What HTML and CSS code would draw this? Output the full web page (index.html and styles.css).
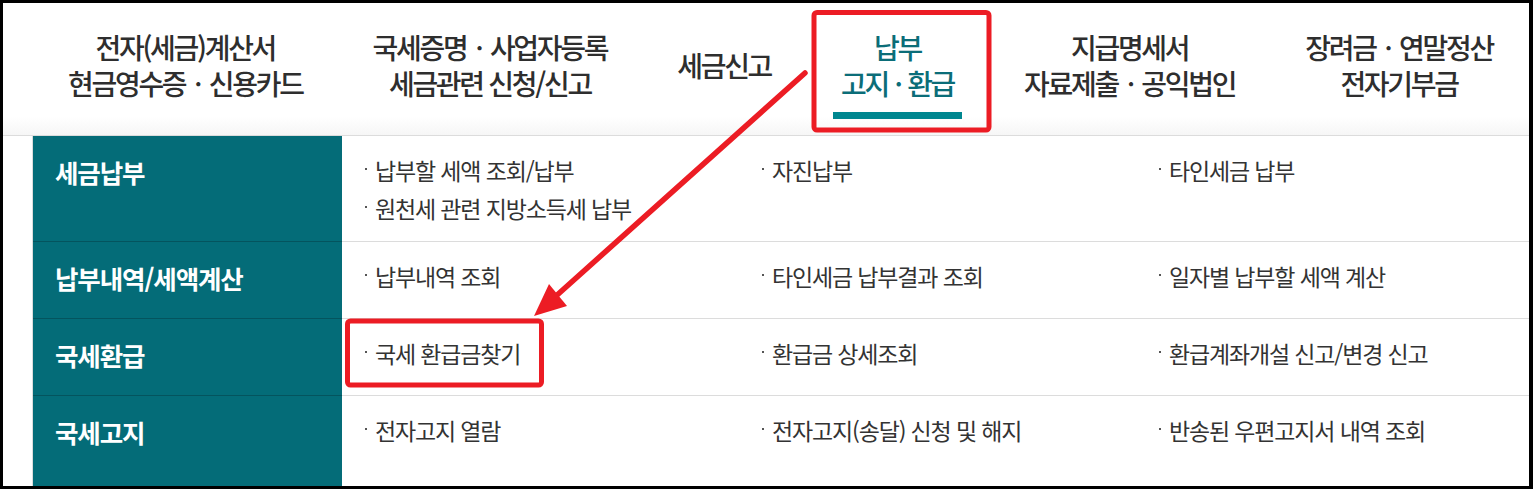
FILE: index.html
```html
<!DOCTYPE html>
<html lang="ko">
<head>
<meta charset="utf-8">
<title>납부 · 고지 · 환급</title>
<link rel="stylesheet" href="styles.css">
</head>
<body>
<div class="frame">
  <nav class="gnb">
    <a class="gnb-item" href="#">전자(세금)계산서<br>현금영수증ㆍ신용카드</a>
    <a class="gnb-item" href="#">국세증명ㆍ사업자등록<br>세금관련 신청/신고</a>
    <a class="gnb-item" href="#">세금신고</a>
    <a class="gnb-item on" href="#">납부<br>고지 · 환급</a>
    <a class="gnb-item" href="#">지급명세서<br>자료제출ㆍ공익법인</a>
    <a class="gnb-item" href="#">장려금ㆍ연말정산<br>전자기부금</a>
  </nav>
  <div class="menu">
    <div class="menu-row">
      <div class="menu-label">세금납부</div>
      <div class="menu-items">
        <ul class="menu-col"><li>납부할 세액 조회/납부</li><li>원천세 관련 지방소득세 납부</li></ul>
        <ul class="menu-col"><li>자진납부</li></ul>
        <ul class="menu-col"><li>타인세금 납부</li></ul>
      </div>
    </div>
    <div class="menu-row">
      <div class="menu-label">납부내역/세액계산</div>
      <div class="menu-items">
        <ul class="menu-col"><li>납부내역 조회</li></ul>
        <ul class="menu-col"><li>타인세금 납부결과 조회</li></ul>
        <ul class="menu-col"><li>일자별 납부할 세액 계산</li></ul>
      </div>
    </div>
    <div class="menu-row">
      <div class="menu-label">국세환급</div>
      <div class="menu-items">
        <ul class="menu-col"><li>국세 환급금찾기</li></ul>
        <ul class="menu-col"><li>환급금 상세조회</li></ul>
        <ul class="menu-col"><li>환급계좌개설 신고/변경 신고</li></ul>
      </div>
    </div>
    <div class="menu-row last">
      <div class="menu-label">국세고지</div>
      <div class="menu-items">
        <ul class="menu-col"><li>전자고지 열람</li></ul>
        <ul class="menu-col"><li>전자고지(송달) 신청 및 해지</li></ul>
        <ul class="menu-col"><li>반송된 우편고지서 내역 조회</li></ul>
      </div>
    </div>
  </div>
</div>
<svg class="annot" width="1533" height="489" viewBox="0 0 1533 489" aria-hidden="true">
  <rect x="814" y="12.5" width="175" height="117.5" rx="3" fill="none" stroke="#ec1c24" stroke-width="5"/>
  <rect x="347.5" y="321" width="194" height="64" rx="3" fill="none" stroke="#ec1c24" stroke-width="5"/>
  <line x1="805" y1="73" x2="556" y2="296" stroke="#ec1c24" stroke-width="5.5" stroke-linecap="round"/>
  <polygon points="534,316 549,284 567,306" fill="#ec1c24"/>
</svg>
</body>
</html>
```
FILE: styles.css
```css
html, body {
  margin: 0;
  padding: 0;
  background: #fff;
}
body {
  position: relative;
  width: 1533px;
  height: 489px;
  overflow: hidden;
  font-family: "Noto Sans CJK KR", "Noto Sans", sans-serif;
  color: #333;
}
.frame {
  width: 1533px;
  height: 489px;
  box-sizing: border-box;
  border: 3px solid #000;
  border-right-width: 4px;
  display: flex;
  flex-direction: column;
  overflow: hidden;
  background: #fff;
}
.gnb {
  flex: none;
  display: flex;
  align-items: flex-start;
  gap: 54px;
  height: 133px;
  box-sizing: border-box;
  padding: 26px 0 0 57px;
  border-bottom: 1px solid #dcdcdc;
  background: linear-gradient(to bottom, #fff 0, #fff 86%, #f6f6f6 100%);
}
.gnb-item {
  display: flex;
  align-items: center;
  justify-content: center;
  height: 72px;
  padding: 0 8px;
  text-align: center;
  text-decoration: none;
  white-space: nowrap;
  color: #2e2e2e;
  font-size: 28px;
  font-weight: 500;
  line-height: 36px;
  letter-spacing: -2.3px;
}
.gnb-item.on {
  color: #0b6d78;
  padding-bottom: 11px;
  border-bottom: 7px solid #008790;
  word-spacing: 1px;
}
.menu {
  flex: 1;
  display: flex;
  flex-direction: column;
  margin-left: 29px;
  border-left: 1px solid #dcdcdc;
}
.menu-row {
  display: grid;
  grid-template-columns: 309px 1fr;
  min-height: 77px;
}
.menu-row.last {
  flex: 1;
}
.menu-label {
  background: #046c78;
  color: #fff;
  border-bottom: 1px solid #04545e;
  padding: 17px 0 0 22px;
  font-size: 25.5px;
  font-weight: 700;
  line-height: 38px;
  letter-spacing: -1.1px;
}
.menu-row.last .menu-label,
.menu-row.last .menu-items {
  border-bottom: 0;
}
.menu-items {
  display: grid;
  grid-template-columns: 397px 397px 1fr;
  padding: 15px 0 14px 23px;
  border-bottom: 1px solid #dcdcdc;
}
.menu-col {
  list-style: none;
  margin: 0;
  padding: 0;
}
.menu-col li {
  font-size: 23px;
  line-height: 38px;
  letter-spacing: -1.15px;
  color: #333;
  white-space: nowrap;
}
.menu-col li::before {
  content: "";
  display: inline-block;
  width: 2px;
  height: 2px;
  background: #555;
  margin-right: 8px;
  vertical-align: 0.42em;
}
.annot {
  position: absolute;
  left: 0;
  top: 0;
  pointer-events: none;
}
```
